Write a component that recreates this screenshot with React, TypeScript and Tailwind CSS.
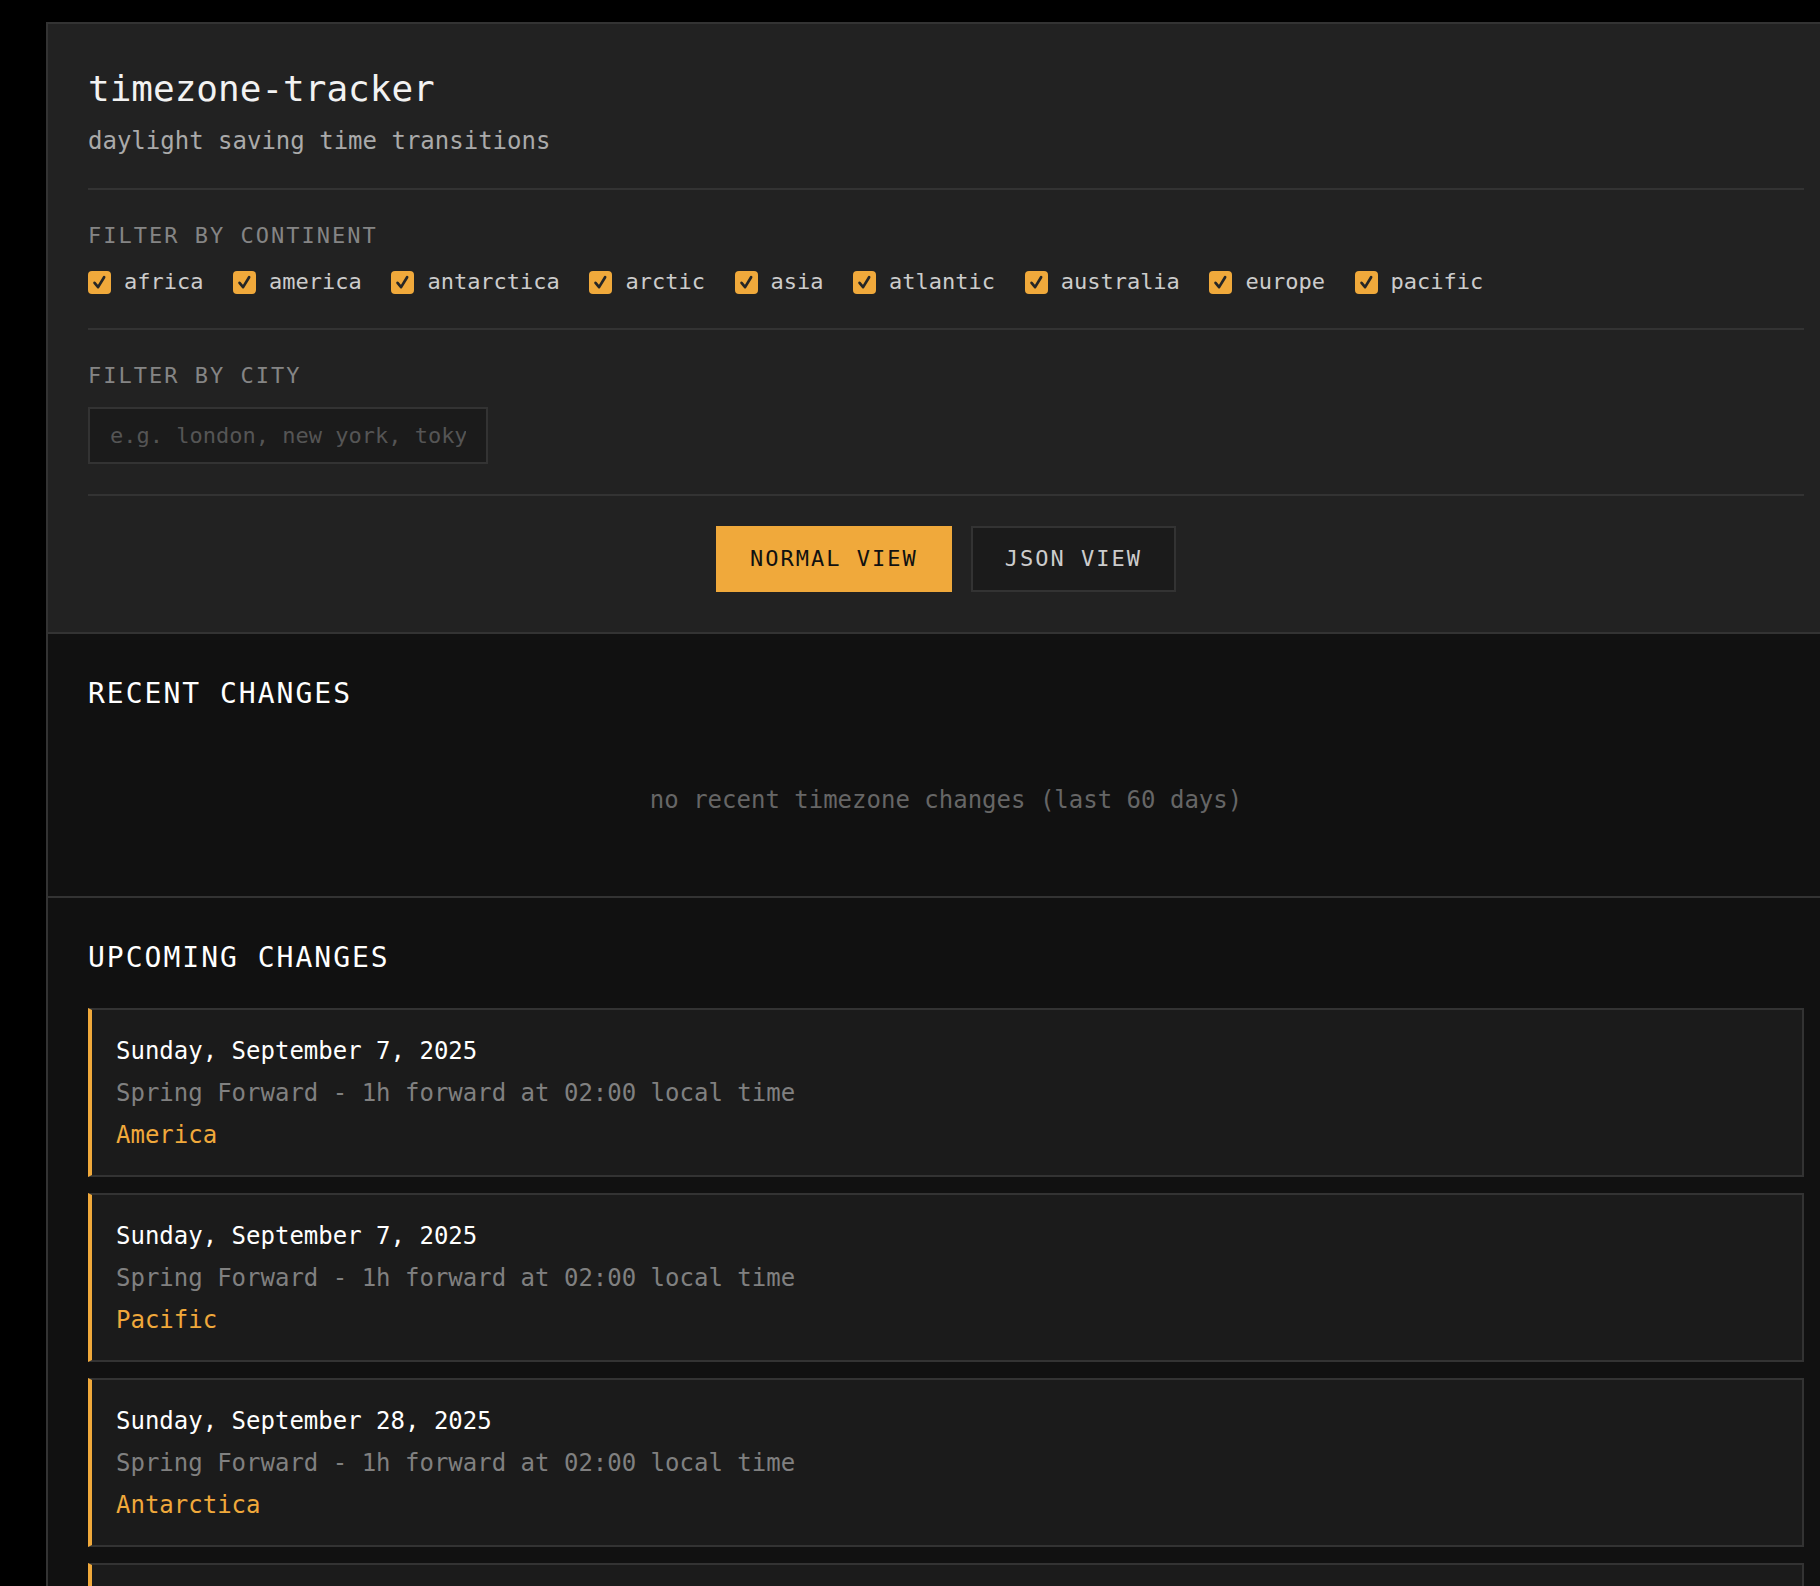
import React from "react";

const ORANGE = "#f0a93b";

const continents = [
  "africa",
  "america",
  "antarctica",
  "arctic",
  "asia",
  "atlantic",
  "australia",
  "europe",
  "pacific",
];

const upcoming = [
  { date: "Sunday, September 7, 2025", desc: "Spring Forward - 1h forward at 02:00 local time", region: "America" },
  { date: "Sunday, September 7, 2025", desc: "Spring Forward - 1h forward at 02:00 local time", region: "Pacific" },
  { date: "Sunday, September 28, 2025", desc: "Spring Forward - 1h forward at 02:00 local time", region: "Antarctica" },
  { date: "Sunday, October 5, 2025", desc: "Spring Forward - 1h forward at 02:00 local time", region: "Australia" },
];

function Check() {
  return (
    <span className="flex h-[23px] w-[23px] items-center justify-center rounded-[4px] bg-[#f0a93b]">
      <svg width="17" height="17" viewBox="0 0 24 24" fill="none">
        <path d="M5 12.5 L10 18.5 L18.5 4.5" stroke="#262626" strokeWidth="3.8" strokeLinecap="round" strokeLinejoin="round" />
      </svg>
    </span>
  );
}

export default function App() {
  return (
    <div className="h-screen overflow-hidden bg-black pl-[46px] pt-[22px] font-['DejaVu_Sans_Mono',monospace]">
      <div className="w-[1800px] border-2 border-[#333]">
        {/* Header */}
        <div className="border-b-2 border-[#333] bg-[#222] px-[40px]">
          <div className="border-b-2 border-[#333] pb-[31px] pt-[40px]">
            <h1 className="text-[36px] leading-[50px] font-normal text-[#f2f2f2]">timezone-tracker</h1>
            <p className="mt-[11px] text-[24px] leading-[32px] text-[#aaaaaa]">daylight saving time transitions</p>
          </div>

          <div className="border-b-2 border-[#333] pb-[31px] pt-[31px]">
            <div className="text-[22px] leading-[30px] tracking-[2px] text-[#858585]">FILTER BY CONTINENT</div>
            <div className="mt-[16px] flex h-[30px] items-center gap-[29.6px]">
              {continents.map((c) => (
                <label key={c} className="flex items-center gap-[13px]">
                  <Check />
                  <span className="text-[22px] leading-[30px] text-[#cccccc]">{c}</span>
                </label>
              ))}
            </div>
          </div>

          <div className="border-b-2 border-[#333] pb-[30px] pt-[31px]">
            <div className="text-[22px] leading-[30px] tracking-[2px] text-[#858585]">FILTER BY CITY</div>
            <input
              type="text"
              placeholder="e.g. london, new york, tokyo"
              className="mt-[16px] block h-[57px] w-[400px] border-2 border-[#333] bg-[#1b1b1b] px-[20px] text-[22px] text-[#cccccc] outline-none placeholder:text-[#555]"
            />
          </div>

          <div className="flex justify-center gap-[19px] pb-[40px] pt-[30px]">
            <button className="border-2 border-[#f0a93b] bg-[#f0a93b] px-[32px] py-[16px] text-[22px] leading-[30px] tracking-[2px] text-[#111]">
              NORMAL VIEW
            </button>
            <button className="border-2 border-[#333] bg-[#1b1b1b] px-[32px] py-[16px] text-[22px] leading-[30px] tracking-[2px] text-[#cccccc]">
              JSON VIEW
            </button>
          </div>
        </div>

        {/* Recent */}
        <div className="border-b-2 border-[#333] bg-[#111] px-[40px] pb-[40px] pt-[40px]">
          <h2 className="text-[28px] leading-[40px] tracking-[2px] text-white">RECENT CHANGES</h2>
          <div className="mt-[30px] py-[40px] text-center text-[24px] leading-[32px] text-[#666]">
            no recent timezone changes (last 60 days)
          </div>
        </div>

        {/* Upcoming */}
        <div className="bg-[#111] px-[40px] pb-[40px] pt-[40px]">
          <h2 className="text-[28px] leading-[40px] tracking-[2px] text-white">UPCOMING CHANGES</h2>
          <div className="mt-[30px] flex flex-col gap-[16px]">
            {upcoming.map((u, i) => (
              <div
                key={i}
                className="border-2 border-l-4 border-[#333] border-l-[#f0a93b] bg-[#1b1b1b] pb-[25px] pl-[24px] pt-[26px]"
              >
                <div className="text-[24px] leading-[30px] text-white">{u.date}</div>
                <div className="mt-[12px] text-[24px] leading-[30px] text-[#808080]">{u.desc}</div>
                <div className="mt-[12px] text-[24px] leading-[30px]" style={{ color: ORANGE }}>
                  {u.region}
                </div>
              </div>
            ))}
          </div>
        </div>
      </div>
    </div>
  );
}
